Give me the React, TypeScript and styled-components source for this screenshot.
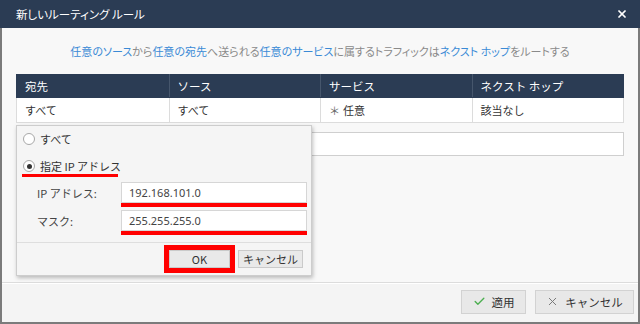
import styled, { createGlobalStyle } from 'styled-components'
import { Check, X } from 'lucide-react'

const GlobalStyle = createGlobalStyle`
  body {
    margin: 0;
    font-family: "Noto Sans CJK JP", "Liberation Sans", sans-serif;
    font-size: 11px;
    color: #333;
  }
  * { box-sizing: border-box; }
`

const columns = ['宛先', 'ソース', 'サービス', 'ネクスト ホップ']

export default function App() {
  return (
    <Window>
      <GlobalStyle />
      <TitleBar>
        <span>新しいルーティング ルール</span>
        <X size={12} strokeWidth={3.5} />
      </TitleBar>

      <Body>
        <Description>
          <Link>任意のソース</Link>から<Link>任意の宛先</Link>へ送られる<Link>任意のサービス</Link>に属するトラフィックは<Link>ネクスト ホップ</Link>をルートする
        </Description>

        <TableArea>
          <Grid $header>
            {columns.map(col => <div key={col}>{col}</div>)}
          </Grid>
          <Grid>
            <div>すべて</div>
            <div>すべて</div>
            <div><Star>＊</Star> 任意</div>
            <div>該当なし</div>
          </Grid>
          <EditInput />

          <Popup>
            <RadioRow $height={26}>
              <Radio />
              <span>すべて</span>
            </RadioRow>
            <RadioRow $height={28}>
              <Radio $checked />
              <span>指定 IP アドレス</span>
              <RedLine $left={5} $width={96} />
            </RadioRow>

            <Fields>
              <Field>
                <Label>IP アドレス:</Label>
                <FieldBox>
                  <TextBox>192.168.101.0</TextBox>
                  <RedBar />
                </FieldBox>
              </Field>
              <Field>
                <Label>マスク:</Label>
                <FieldBox>
                  <TextBox>255.255.255.0</TextBox>
                  <RedBar />
                </FieldBox>
              </Field>
            </Fields>

            <PopupFooter>
              <Highlight>
                <SmallButton $wide>OK</SmallButton>
              </Highlight>
              <SmallButton>キャンセル</SmallButton>
            </PopupFooter>
          </Popup>
        </TableArea>
      </Body>

      <Footer>
        <FooterButton>
          <Check size={13} color="#4caf50" strokeWidth={2.5} />
          適用
        </FooterButton>
        <FooterButton $wide>
          <X size={13} color="#777" strokeWidth={1.8} />
          キャンセル
        </FooterButton>
      </Footer>
    </Window>
  )
}

const Window = styled.div`
  width: 640px;
  height: 324px;
  display: flex;
  flex-direction: column;
  background: #f8f8f8;
  border: 2px solid #7b7b7b;
  border-top: none;
`

const TitleBar = styled.div`
  height: 28px;
  margin: 0 -2px;
  padding: 0 12px 0 16px;
  display: flex;
  align-items: center;
  justify-content: space-between;
  background: #2b3c54;
  color: #fff;
  font-size: 11.5px;
  font-feature-settings: "palt";
`

const Body = styled.div`
  flex: 1;
  padding: 0 14px;
`

const Description = styled.div`
  height: 46px;
  display: flex;
  align-items: center;
  justify-content: center;
  color: #8a8a8a;
  font-size: 11px;
  font-feature-settings: "palt";
`

const Link = styled.span`
  color: #3a8ad6;
`

const TableArea = styled.div`
  position: relative;
`

const Grid = styled.div<{ $header?: boolean }>`
  display: grid;
  grid-template-columns: repeat(4, 1fr);
  height: ${p => (p.$header ? '24px' : '25px')};
  background: ${p => (p.$header ? '#2b3c54' : '#fff')};
  color: ${p => (p.$header ? '#fff' : '#333')};
  border: 1px solid ${p => (p.$header ? '#2b3c54' : '#dcdcdc')};
  border-top: none;
  font-size: ${p => (p.$header ? '11.5px' : '11px')};

  div {
    display: flex;
    align-items: center;
    padding-left: 8px;
    border-left: 1px solid ${p => (p.$header ? '#46566c' : '#dcdcdc')};

    &:first-child {
      border-left: none;
    }
  }
`

const Star = styled.span`
  color: #666;
  margin-right: 3px;
`

const EditInput = styled.div`
  margin-top: 9px;
  height: 24px;
  background: #fff;
  border: 1px solid #cfcfcf;
`

const Popup = styled.div`
  position: absolute;
  top: 51px;
  left: 0;
  width: 296px;
  height: 151px;
  background: #f5f5f5;
  border: 1px solid #cdcdcd;
  box-shadow: 1px 2px 4px rgba(0, 0, 0, 0.25);
`

const RadioRow = styled.div<{ $height: number }>`
  position: relative;
  height: ${p => p.$height}px;
  display: flex;
  align-items: center;
  gap: 5px;
  padding-left: 6px;
`

const Radio = styled.span<{ $checked?: boolean }>`
  width: 12px;
  height: 12px;
  border-radius: 50%;
  border: 1px solid #a8a8a8;
  background: #fff;
  display: flex;
  align-items: center;
  justify-content: center;

  &::after {
    content: '';
    width: 5px;
    height: 5px;
    border-radius: 50%;
    background: ${p => (p.$checked ? '#333' : 'transparent')};
  }
`

const RedLine = styled.span<{ $left: number; $width: number }>`
  position: absolute;
  left: ${p => p.$left}px;
  width: ${p => p.$width}px;
  bottom: 3px;
  height: 3px;
  background: #f00;
`

const Fields = styled.div`
  padding-top: 2px;
`

const Field = styled.div`
  display: flex;
  padding-left: 20px;
  padding-right: 4px;
  height: 28px;
`

const Label = styled.div`
  width: 84px;
  height: 21px;
  display: flex;
  align-items: center;
  color: #444;
`

const FieldBox = styled.div`
  flex: 1;
  display: flex;
  flex-direction: column;
`

const TextBox = styled.div`
  height: 21px;
  background: #fff;
  border: 1px solid #d6d6d6;
  display: flex;
  align-items: center;
  padding-left: 7px;
  color: #444;
  font-family: "Noto Sans", "Liberation Sans", sans-serif;
  font-size: 11px;
`

const RedBar = styled.div`
  height: 4px;
  background: #f00;
`

const PopupFooter = styled.div`
  margin-top: 4px;
  border-top: 1px solid #dedede;
  padding-top: 2px;
  padding-right: 8px;
  display: flex;
  justify-content: flex-end;
  align-items: center;
  gap: 3px;
`

const Highlight = styled.div`
  border: 5px solid #f00;
  background: #fff;
`

const SmallButton = styled.button<{ $wide?: boolean }>`
  width: ${p => (p.$wide ? '61px' : '65px')};
  height: 18px;
  padding: 0;
  background: #e9e9e9;
  border: 1px solid #cacaca;
  color: #333;
  font-family: inherit;
  font-size: 11px;
  display: flex;
  align-items: center;
  justify-content: center;
`

const Footer = styled.div`
  height: 40px;
  border-top: 1px solid #dcdcdc;
  box-shadow: inset 0 1px 0 #fff;
  background: #f4f4f4;
  display: flex;
  justify-content: flex-end;
  align-items: center;
  gap: 9px;
  padding: 0 4px 2px 0;
`

const FooterButton = styled.button<{ $wide?: boolean }>`
  width: ${p => (p.$wide ? '99px' : '65px')};
  height: 24px;
  background: #e8e8e8;
  border: 1px solid #d2d2d2;
  color: #333;
  font-family: inherit;
  font-size: 11.5px;
  display: flex;
  align-items: center;
  justify-content: center;
  gap: 6px;
  padding: 0;
`
